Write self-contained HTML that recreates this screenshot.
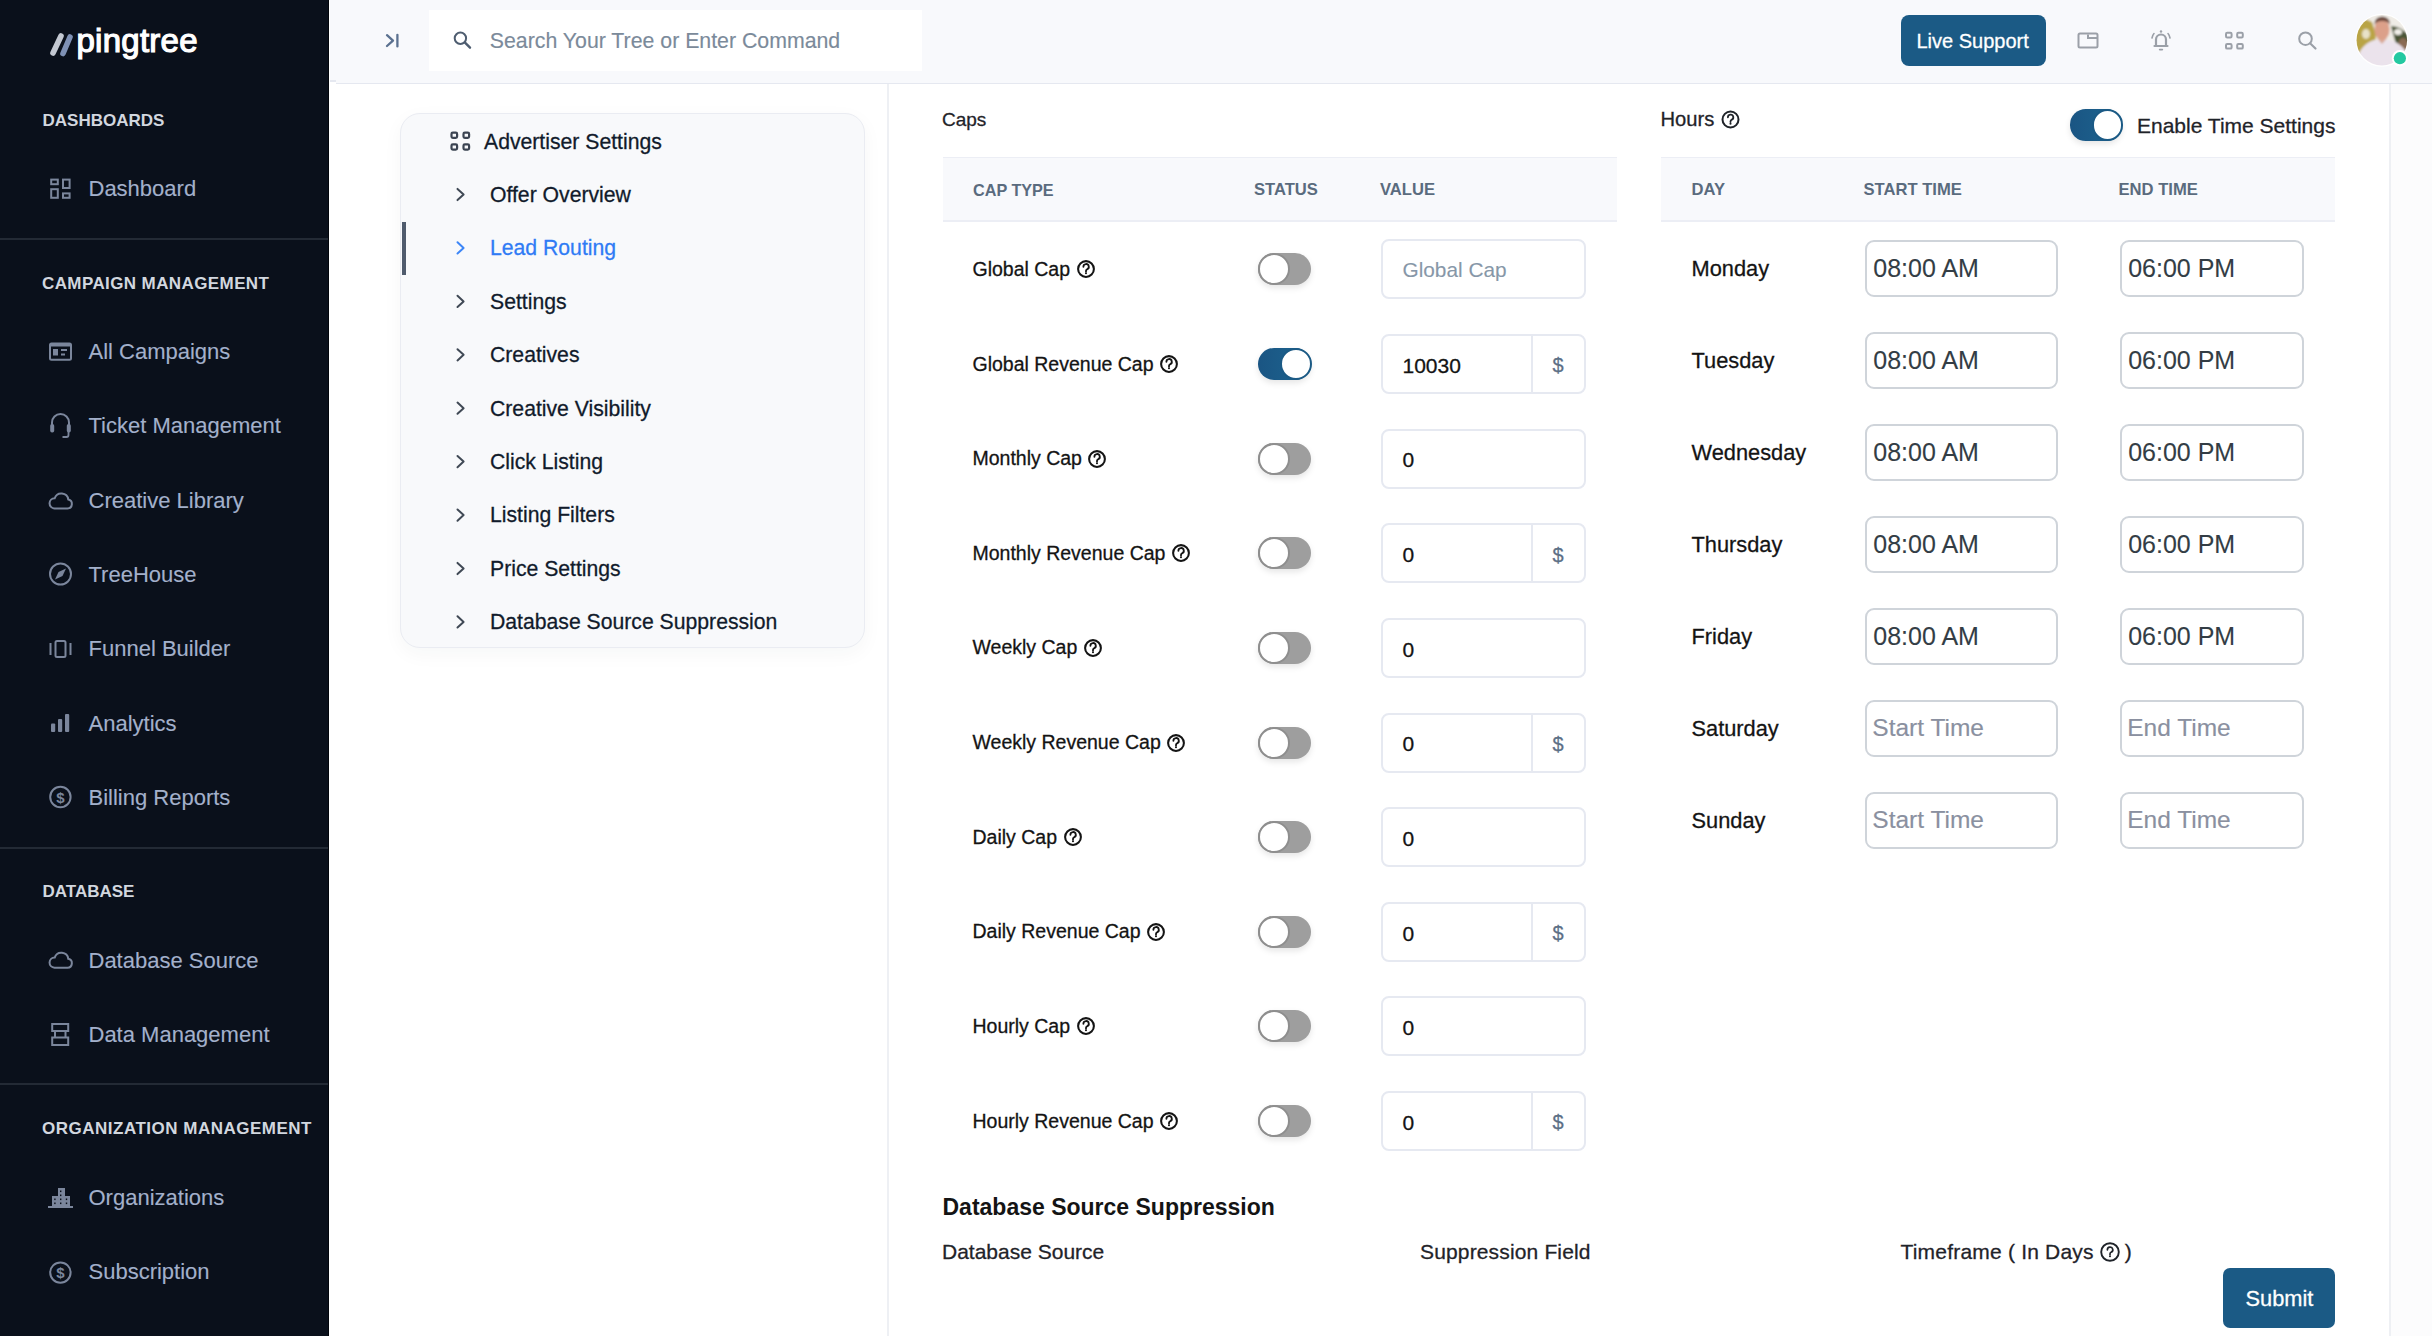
<!DOCTYPE html>
<html><head><meta charset="utf-8"><title>pingtree</title><style>
html,body{margin:0;padding:0;width:2432px;height:1336px;overflow:hidden;background:#ffffff}
body{position:relative;font-family:"Liberation Sans",sans-serif}
.t{position:absolute;line-height:1;white-space:nowrap;-webkit-text-stroke:0.28px}
</style></head><body>
<div style="position:absolute;left:0;top:0;width:329px;height:1336px;background:#0a101b"></div>
<div style="position:absolute;left:328px;top:0px;width:1px;height:1336px;background:#02050b"></div>
<div style="position:absolute;left:0;top:237.5px;width:328px;height:2px;background:#232a35"></div>
<div style="position:absolute;left:0;top:846.7px;width:328px;height:2px;background:#232a35"></div>
<div style="position:absolute;left:0;top:1083.3px;width:328px;height:2px;background:#232a35"></div>
<div class="t" style="left:42.5px;top:111.6px;font-size:17px;color:#d2d7df;font-weight:700;-webkit-text-stroke:0;">DASHBOARDS</div>
<div class="t" style="left:42.0px;top:274.7px;font-size:17px;color:#d2d7df;font-weight:700;-webkit-text-stroke:0;letter-spacing:0.4px;">CAMPAIGN MANAGEMENT</div>
<div class="t" style="left:42.5px;top:883.4px;font-size:17px;color:#d2d7df;font-weight:700;-webkit-text-stroke:0;">DATABASE</div>
<div class="t" style="left:42.0px;top:1120.2px;font-size:17px;color:#d2d7df;font-weight:700;-webkit-text-stroke:0;letter-spacing:0.5px;">ORGANIZATION MANAGEMENT</div>
<div class="t" style="left:88.5px;top:178.2px;font-size:22px;color:#a3b0cb;-webkit-text-stroke:0.12px;">Dashboard</div>
<div class="t" style="left:88.5px;top:341.1px;font-size:22px;color:#a3b0cb;-webkit-text-stroke:0.12px;">All Campaigns</div>
<div class="t" style="left:88.5px;top:415.4px;font-size:22px;color:#a3b0cb;-webkit-text-stroke:0.12px;">Ticket Management</div>
<div class="t" style="left:88.5px;top:489.8px;font-size:22px;color:#a3b0cb;-webkit-text-stroke:0.12px;">Creative Library</div>
<div class="t" style="left:88.5px;top:564.1px;font-size:22px;color:#a3b0cb;-webkit-text-stroke:0.12px;">TreeHouse</div>
<div class="t" style="left:88.5px;top:638.4px;font-size:22px;color:#a3b0cb;-webkit-text-stroke:0.12px;">Funnel Builder</div>
<div class="t" style="left:88.5px;top:712.7px;font-size:22px;color:#a3b0cb;-webkit-text-stroke:0.12px;">Analytics</div>
<div class="t" style="left:88.5px;top:787.0px;font-size:22px;color:#a3b0cb;-webkit-text-stroke:0.12px;">Billing Reports</div>
<div class="t" style="left:88.5px;top:949.6px;font-size:22px;color:#a3b0cb;-webkit-text-stroke:0.12px;">Database Source</div>
<div class="t" style="left:88.5px;top:1023.9px;font-size:22px;color:#a3b0cb;-webkit-text-stroke:0.12px;">Data Management</div>
<div class="t" style="left:88.5px;top:1187.0px;font-size:22px;color:#a3b0cb;-webkit-text-stroke:0.12px;">Organizations</div>
<div class="t" style="left:88.5px;top:1261.3px;font-size:22px;color:#a3b0cb;-webkit-text-stroke:0.12px;">Subscription</div>
<svg style="position:absolute;left:0;top:0" width="329" height="80" viewBox="0 0 329 80">
<line x1="53" y1="53" x2="61" y2="36" stroke="#c3c8d2" stroke-width="5.6" stroke-linecap="round"/>
<line x1="63" y1="53.5" x2="70" y2="37" stroke="#7f91b5" stroke-width="5.6" stroke-linecap="round"/>
</svg>
<div class="t" style="left:76.5px;top:23.6px;font-size:33px;color:#ffffff;letter-spacing:0.25px;-webkit-text-stroke:1.2px #ffffff;">pingtree</div>
<svg style="position:absolute;left:0;top:0" width="329" height="1336" viewBox="0 0 329 1336" fill="none" stroke="#7b869c" stroke-width="2">
<rect x="51.2" y="179.6" width="6.6" height="4.6"/><rect x="63" y="179.6" width="6.6" height="8.4"/><rect x="51.2" y="189.2" width="6.6" height="8.6"/><rect x="63" y="193.4" width="6.6" height="4.4"/>
<rect x="50" y="343.5" width="21" height="16.2" rx="1.5" stroke-width="2"/><line x1="50" y1="345" x2="71" y2="345" stroke-width="3"/><rect x="53" y="349" width="5" height="6.5" fill="#7b869c" stroke="none"/><line x1="61" y1="350" x2="67" y2="350" stroke-width="2"/><line x1="61" y1="354.5" x2="65" y2="354.5" stroke-width="2"/>
<path d="M52 428 v-5.5 a8.5 8.5 0 0 1 17 0 v5.5" stroke-width="2"/><rect x="50.2" y="424" width="4" height="8.5" rx="1.8" fill="#7b869c" stroke="none"/><rect x="66.8" y="424" width="4" height="8.5" rx="1.8" fill="#7b869c" stroke="none"/><path d="M68.5 432 v3 a2 2 0 0 1 -2 2 h-4" stroke-width="1.8"/>
<path d="M54.5 508.4 h13 a4.5 4.5 0 0 0 0.8 -8.9 a7 7 0 0 0 -13.6 -1.2 a5 5 0 0 0 -0.2 10.1 z" stroke-width="2"/>
<path d="M54.5 967.7 h13 a4.5 4.5 0 0 0 0.8 -8.9 a7 7 0 0 0 -13.6 -1.2 a5 5 0 0 0 -0.2 10.1 z" stroke-width="2"/>
<circle cx="60.5" cy="574" r="10.5"/><path d="M66 568.5 L62.5 576 L55 579.5 L58.5 572 Z" fill="#7b869c" stroke="none"/>
<rect x="55.5" y="641" width="10" height="16" rx="1.5"/><line x1="50.5" y1="643" x2="50.5" y2="655"/><line x1="70.5" y1="643" x2="70.5" y2="655"/>
<rect x="51" y="723.5" width="4.2" height="8.5" rx="1" fill="#7b869c" stroke="none"/><rect x="58" y="719" width="4.2" height="13" rx="1" fill="#7b869c" stroke="none"/><rect x="65" y="714" width="4.2" height="18" rx="1" fill="#7b869c" stroke="none"/>
<circle cx="60.4" cy="797" r="10.2"/><text x="60.4" y="802.5" font-family="Liberation Sans" font-size="15" font-weight="700" fill="#7b869c" stroke="none" text-anchor="middle">$</text>
<circle cx="60.4" cy="1272.6" r="10.2"/><text x="60.4" y="1278.1" font-family="Liberation Sans" font-size="15" font-weight="700" fill="#7b869c" stroke="none" text-anchor="middle">$</text>
<rect x="52.2" y="1024" width="16" height="7"/><rect x="52.2" y="1037.5" width="16" height="7.5"/><line x1="55" y1="1031" x2="55" y2="1037.5"/><line x1="65.5" y1="1031" x2="65.5" y2="1037.5"/>
<g fill="#7b869c" stroke="none"><rect x="48" y="1206" width="25" height="2"/><rect x="58" y="1188" width="7" height="19"/><rect x="52" y="1196" width="18" height="11"/></g><g fill="#0a101b" stroke="none"><rect x="60" y="1190.5" width="1.4" height="1.6"/><rect x="60" y="1194.5" width="1.4" height="1.6"/><rect x="54.2" y="1198.5" width="1.4" height="1.6"/><rect x="60" y="1198.5" width="1.4" height="1.6"/><rect x="65.8" y="1198.5" width="1.4" height="1.6"/><rect x="54.2" y="1202.5" width="1.4" height="1.6"/><rect x="60" y="1202.5" width="1.4" height="1.6"/><rect x="65.8" y="1202.5" width="1.4" height="1.6"/></g>
</svg>
<div style="position:absolute;left:330px;top:0px;width:6px;height:80.5px;background:#f8f9fc"></div>
<div style="position:absolute;left:330px;top:80px;width:6px;height:1.5px;background:#e5e8f0"></div>
<div style="position:absolute;left:336px;top:0px;width:2096px;height:83px;background:#f8f9fc"></div>
<div style="position:absolute;left:336px;top:82.5px;width:2096px;height:1.5px;background:#e5e8f0"></div>
<div style="position:absolute;left:428.5px;top:10px;width:493.5px;height:60.5px;background:#ffffff"></div>
<div class="t" style="left:489.8px;top:31.2px;font-size:21.3px;color:#7b8a9a;-webkit-text-stroke:0.15px;">Search Your Tree or Enter Command</div>
<div style="position:absolute;left:1900.5px;top:15px;width:145px;height:51px;background:#1b5a85;border-radius:8px"></div>
<div class="t" style="left:1916.5px;top:31.1px;font-size:20px;color:#ffffff;">Live Support</div>
<svg style="position:absolute;left:0;top:0" width="2432" height="90" viewBox="0 0 2432 90" fill="none">
<path d="M387 35.2 L393 40.6 L387 46" stroke="#5b7190" stroke-width="2.3" stroke-linecap="round" stroke-linejoin="round"/><line x1="397.4" y1="34.8" x2="397.4" y2="46.4" stroke="#5b7190" stroke-width="2.3" stroke-linecap="round"/>
<circle cx="460.4" cy="38.2" r="5.7" stroke="#4e5d70" stroke-width="2"/><line x1="465" y1="42.7" x2="470" y2="47.7" stroke="#4e5d70" stroke-width="2.4" stroke-linecap="round"/>
<rect x="2078.5" y="33.5" width="19" height="14" rx="1.5" stroke="#9ba0a8" stroke-width="2"/><path d="M2088 34.5 v3.5 h9" stroke="#9ba0a8" stroke-width="2"/>
<path d="M2154.5 46 h13 M2156 45.5 v-6 a5 5 0 0 1 10 0 v6" stroke="#9ba0a8" stroke-width="2.2" stroke-linecap="round"/><circle cx="2161" cy="31.5" r="1.2" fill="#9ba0a8"/><path d="M2159.6 49.6 h2.8" stroke="#9ba0a8" stroke-width="1.6" stroke-linecap="round"/><path d="M2152 38 q0.6 -3 2 -4.5 M2170 38 q-0.6 -3 -2 -4.5" stroke="#9ba0a8" stroke-width="1.6" stroke-linecap="round"/>
<rect x="2226" y="32.8" width="5.6" height="4.6" rx="1.2" stroke="#9ba0a8" stroke-width="2"/><rect x="2237.2" y="32.8" width="5.6" height="4.6" rx="1.2" stroke="#9ba0a8" stroke-width="2"/><rect x="2226" y="44" width="5.6" height="4.6" rx="1.2" stroke="#9ba0a8" stroke-width="2"/><rect x="2237.2" y="44" width="5.6" height="4.6" rx="1.2" stroke="#9ba0a8" stroke-width="2"/>
<circle cx="2305.5" cy="38.7" r="6.3" stroke="#9ba0a8" stroke-width="2"/><line x1="2310.3" y1="43.5" x2="2315.5" y2="48.5" stroke="#9ba0a8" stroke-width="2.2" stroke-linecap="round"/>
<defs><clipPath id="av"><circle cx="2381.8" cy="40.2" r="25.3"/></clipPath>
<filter id="blur1" x="-20%" y="-20%" width="140%" height="140%"><feGaussianBlur stdDeviation="1.2"/></filter></defs>
<circle cx="2381.8" cy="40.2" r="26.5" fill="#ffffff"/>
<g clip-path="url(#av)"><g filter="url(#blur1)">
<rect x="2354" y="12" width="56" height="58" fill="#efece6"/>
<path d="M2354 22 q8 -6 18 0 l4 12 l-2 20 l-18 0 z" fill="#b9a444"/>
<ellipse cx="2366" cy="34" rx="4" ry="5" fill="#e8e2c8"/>
<path d="M2391 26 q10 0 18 10 l0 18 l-12 -6 z" fill="#4a5534"/>
<ellipse cx="2398" cy="32" rx="4" ry="3" fill="#f2f0ea"/>
<ellipse cx="2403" cy="45" rx="5" ry="7" fill="#8a6a52"/>
<path d="M2356 70 q0 -24 18 -30 l7 0 l8 0 q20 4 22 30 z" fill="#ebe3ec"/>
<path d="M2377 38 l5 6 l5 -6 z" fill="#d9aa98"/>
<ellipse cx="2382" cy="29.5" rx="7.6" ry="10.5" fill="#dca089"/>
<path d="M2374.2 25 q0 -8 8 -8.5 q8 0.5 8 8.5 q-2 -4 -8 -4 q-6 0 -8 4z" fill="#6d4a3e"/>
</g></g>
<circle cx="2399.9" cy="58.2" r="8.1" fill="#ffffff"/><circle cx="2399.9" cy="58.2" r="6.1" fill="#24c9a1"/>
</svg>
<div style="position:absolute;left:399.8px;top:112.8px;width:465.5px;height:535px;box-sizing:border-box;background:#f8f9fb;border:1.5px solid #eaecf2;border-radius:20px;box-shadow:0 6px 20px rgba(30,40,60,0.04)"></div>
<div style="position:absolute;left:401.5px;top:221.5px;width:4.5px;height:53px;background:#4f5b6d"></div>
<div class="t" style="left:484.0px;top:131.1px;font-size:21.2px;color:#111b2b;">Advertiser Settings</div>
<div class="t" style="left:490.0px;top:183.8px;font-size:21.2px;color:#111b2b;">Offer Overview</div>
<div class="t" style="left:490.0px;top:237.2px;font-size:21.2px;color:#2f7bf5;">Lead Routing</div>
<div class="t" style="left:490.0px;top:290.6px;font-size:21.2px;color:#111b2b;">Settings</div>
<div class="t" style="left:490.0px;top:344.0px;font-size:21.2px;color:#111b2b;">Creatives</div>
<div class="t" style="left:490.0px;top:397.5px;font-size:21.2px;color:#111b2b;">Creative Visibility</div>
<div class="t" style="left:490.0px;top:450.9px;font-size:21.2px;color:#111b2b;">Click Listing</div>
<div class="t" style="left:490.0px;top:504.3px;font-size:21.2px;color:#111b2b;">Listing Filters</div>
<div class="t" style="left:490.0px;top:557.8px;font-size:21.2px;color:#111b2b;">Price Settings</div>
<div class="t" style="left:490.0px;top:611.2px;font-size:21.2px;color:#111b2b;">Database Source Suppression</div>
<svg style="position:absolute;left:0;top:0" width="900" height="700" viewBox="0 0 900 700" fill="none">
<rect x="451.5" y="132.6" width="5.6" height="5.2" rx="1.3" stroke="#3b4452" stroke-width="2.2"/><rect x="463.5" y="132.6" width="5.6" height="5.2" rx="1.3" stroke="#3b4452" stroke-width="2.2"/><rect x="451.5" y="144.4" width="5.6" height="5.2" rx="1.3" stroke="#3b4452" stroke-width="2.2"/><rect x="463.5" y="144.4" width="5.6" height="5.2" rx="1.3" stroke="#3b4452" stroke-width="2.2"/>
<path d="M457.5 188.9 L463.6 194.5 L457.5 200.1" stroke="#404955" stroke-width="2" stroke-linecap="round" stroke-linejoin="round"/>
<path d="M457.5 242.3 L463.6 247.9 L457.5 253.5" stroke="#3d86f7" stroke-width="2" stroke-linecap="round" stroke-linejoin="round"/>
<path d="M457.5 295.8 L463.6 301.4 L457.5 307.0" stroke="#404955" stroke-width="2" stroke-linecap="round" stroke-linejoin="round"/>
<path d="M457.5 349.2 L463.6 354.8 L457.5 360.4" stroke="#404955" stroke-width="2" stroke-linecap="round" stroke-linejoin="round"/>
<path d="M457.5 402.6 L463.6 408.2 L457.5 413.8" stroke="#404955" stroke-width="2" stroke-linecap="round" stroke-linejoin="round"/>
<path d="M457.5 456.0 L463.6 461.6 L457.5 467.2" stroke="#404955" stroke-width="2" stroke-linecap="round" stroke-linejoin="round"/>
<path d="M457.5 509.5 L463.6 515.1 L457.5 520.7" stroke="#404955" stroke-width="2" stroke-linecap="round" stroke-linejoin="round"/>
<path d="M457.5 562.9 L463.6 568.5 L457.5 574.1" stroke="#404955" stroke-width="2" stroke-linecap="round" stroke-linejoin="round"/>
<path d="M457.5 616.3 L463.6 621.9 L457.5 627.5" stroke="#404955" stroke-width="2" stroke-linecap="round" stroke-linejoin="round"/>
</svg>
<div style="position:absolute;left:886.5px;top:84px;width:2px;height:1252px;background:#eef0f4"></div>
<div style="position:absolute;left:2391px;top:84px;width:41px;height:1252px;background:#fcfcfd"></div>
<div style="position:absolute;left:2389.3px;top:84px;width:2px;height:1252px;background:#eef0f4"></div>
<div class="t" style="left:942.0px;top:110.1px;font-size:19px;color:#1f2329;">Caps</div>
<div style="position:absolute;left:942.5px;top:157px;width:674.5px;height:64.5px;box-sizing:border-box;background:#f8f9fc;border-top:1.5px solid #eceef5;border-bottom:2px solid #eceef5"></div>
<div class="t" style="left:973.0px;top:182.1px;font-size:16.2px;color:#5a6b7e;font-weight:700;-webkit-text-stroke:0;">CAP TYPE</div>
<div class="t" style="left:1254.0px;top:181.7px;font-size:16.6px;color:#5a6b7e;font-weight:700;-webkit-text-stroke:0;">STATUS</div>
<div class="t" style="left:1380.0px;top:181.7px;font-size:16.6px;color:#5a6b7e;font-weight:700;-webkit-text-stroke:0;">VALUE</div>
<div class="t" style="left:972.5px;top:259.9px;font-size:19.5px;color:#141414">Global Cap<svg width="18" height="18" viewBox="0 0 18 18" style="display:inline-block;vertical-align:-2.5px;margin-left:6.5px"><circle cx="9.0" cy="9.0" r="7.9" stroke="#141414" stroke-width="2.05" fill="none"/><path d="M6.4 6.8 a2.7 2.7 0 1 1 3.6 2.5 c-0.8 0.3 -1 0.8 -1 1.6 v0.6" stroke="#141414" stroke-width="1.84" fill="none" stroke-linecap="round"/><circle cx="9.0" cy="13.3" r="1.05" fill="#141414"/></svg></div>
<div style="position:absolute;left:1257.8px;top:253.4px;width:53px;height:32px;border-radius:16.0px;background:#9e9e9e;box-shadow:0 3px 6px rgba(0,0,0,0.10)"><div style="position:absolute;top:0;left:0px;border:2px solid #8e8e8e;width:28px;height:28px;border-radius:50%;background:#fff"></div></div>
<div style="position:absolute;left:1380.5px;top:239.4px;width:205.5px;height:60px;box-sizing:border-box;border:2px solid #e6e9f1;border-radius:8px;background:#fff"></div>
<div class="t" style="left:1402.5px;top:260.3px;font-size:20.8px;color:#8797a8;-webkit-text-stroke:0.1px;">Global Cap</div>
<div class="t" style="left:972.5px;top:354.5px;font-size:19.5px;color:#141414">Global Revenue Cap<svg width="18" height="18" viewBox="0 0 18 18" style="display:inline-block;vertical-align:-2.5px;margin-left:6.5px"><circle cx="9.0" cy="9.0" r="7.9" stroke="#141414" stroke-width="2.05" fill="none"/><path d="M6.4 6.8 a2.7 2.7 0 1 1 3.6 2.5 c-0.8 0.3 -1 0.8 -1 1.6 v0.6" stroke="#141414" stroke-width="1.84" fill="none" stroke-linecap="round"/><circle cx="9.0" cy="13.3" r="1.05" fill="#141414"/></svg></div>
<div style="position:absolute;left:1257.8px;top:348.0px;width:53px;height:32px;border-radius:16.0px;background:linear-gradient(90deg,#1a5583,#1d6590);box-shadow:0 3px 6px rgba(0,0,0,0.10)"><div style="position:absolute;top:0;left:22px;border:2px solid #1b5a85;width:28px;height:28px;border-radius:50%;background:#fff"></div></div>
<div style="position:absolute;left:1380.5px;top:334.0px;width:205.5px;height:60px;box-sizing:border-box;border:2px solid #e6e9f1;border-radius:8px;background:#fff"></div>
<div style="position:absolute;left:1531.2px;top:335.0px;width:2px;height:58px;background:#e6e9f1"></div>
<div class="t" style="left:1552.5px;top:355.4px;font-size:20px;color:#5c6f86;">$</div>
<div class="t" style="left:1402.5px;top:354.8px;font-size:21px;color:#141414;">10030</div>
<div class="t" style="left:972.5px;top:449.2px;font-size:19.5px;color:#141414">Monthly Cap<svg width="18" height="18" viewBox="0 0 18 18" style="display:inline-block;vertical-align:-2.5px;margin-left:6.5px"><circle cx="9.0" cy="9.0" r="7.9" stroke="#141414" stroke-width="2.05" fill="none"/><path d="M6.4 6.8 a2.7 2.7 0 1 1 3.6 2.5 c-0.8 0.3 -1 0.8 -1 1.6 v0.6" stroke="#141414" stroke-width="1.84" fill="none" stroke-linecap="round"/><circle cx="9.0" cy="13.3" r="1.05" fill="#141414"/></svg></div>
<div style="position:absolute;left:1257.8px;top:442.7px;width:53px;height:32px;border-radius:16.0px;background:#9e9e9e;box-shadow:0 3px 6px rgba(0,0,0,0.10)"><div style="position:absolute;top:0;left:0px;border:2px solid #8e8e8e;width:28px;height:28px;border-radius:50%;background:#fff"></div></div>
<div style="position:absolute;left:1380.5px;top:428.7px;width:205.5px;height:60px;box-sizing:border-box;border:2px solid #e6e9f1;border-radius:8px;background:#fff"></div>
<div class="t" style="left:1402.5px;top:449.4px;font-size:21px;color:#141414;">0</div>
<div class="t" style="left:972.5px;top:543.8px;font-size:19.5px;color:#141414">Monthly Revenue Cap<svg width="18" height="18" viewBox="0 0 18 18" style="display:inline-block;vertical-align:-2.5px;margin-left:6.5px"><circle cx="9.0" cy="9.0" r="7.9" stroke="#141414" stroke-width="2.05" fill="none"/><path d="M6.4 6.8 a2.7 2.7 0 1 1 3.6 2.5 c-0.8 0.3 -1 0.8 -1 1.6 v0.6" stroke="#141414" stroke-width="1.84" fill="none" stroke-linecap="round"/><circle cx="9.0" cy="13.3" r="1.05" fill="#141414"/></svg></div>
<div style="position:absolute;left:1257.8px;top:537.3px;width:53px;height:32px;border-radius:16.0px;background:#9e9e9e;box-shadow:0 3px 6px rgba(0,0,0,0.10)"><div style="position:absolute;top:0;left:0px;border:2px solid #8e8e8e;width:28px;height:28px;border-radius:50%;background:#fff"></div></div>
<div style="position:absolute;left:1380.5px;top:523.3px;width:205.5px;height:60px;box-sizing:border-box;border:2px solid #e6e9f1;border-radius:8px;background:#fff"></div>
<div style="position:absolute;left:1531.2px;top:524.3px;width:2px;height:58px;background:#e6e9f1"></div>
<div class="t" style="left:1552.5px;top:544.7px;font-size:20px;color:#5c6f86;">$</div>
<div class="t" style="left:1402.5px;top:544.0px;font-size:21px;color:#141414;">0</div>
<div class="t" style="left:972.5px;top:638.4px;font-size:19.5px;color:#141414">Weekly Cap<svg width="18" height="18" viewBox="0 0 18 18" style="display:inline-block;vertical-align:-2.5px;margin-left:6.5px"><circle cx="9.0" cy="9.0" r="7.9" stroke="#141414" stroke-width="2.05" fill="none"/><path d="M6.4 6.8 a2.7 2.7 0 1 1 3.6 2.5 c-0.8 0.3 -1 0.8 -1 1.6 v0.6" stroke="#141414" stroke-width="1.84" fill="none" stroke-linecap="round"/><circle cx="9.0" cy="13.3" r="1.05" fill="#141414"/></svg></div>
<div style="position:absolute;left:1257.8px;top:631.9px;width:53px;height:32px;border-radius:16.0px;background:#9e9e9e;box-shadow:0 3px 6px rgba(0,0,0,0.10)"><div style="position:absolute;top:0;left:0px;border:2px solid #8e8e8e;width:28px;height:28px;border-radius:50%;background:#fff"></div></div>
<div style="position:absolute;left:1380.5px;top:617.9px;width:205.5px;height:60px;box-sizing:border-box;border:2px solid #e6e9f1;border-radius:8px;background:#fff"></div>
<div class="t" style="left:1402.5px;top:638.6px;font-size:21px;color:#141414;">0</div>
<div class="t" style="left:972.5px;top:733.0px;font-size:19.5px;color:#141414">Weekly Revenue Cap<svg width="18" height="18" viewBox="0 0 18 18" style="display:inline-block;vertical-align:-2.5px;margin-left:6.5px"><circle cx="9.0" cy="9.0" r="7.9" stroke="#141414" stroke-width="2.05" fill="none"/><path d="M6.4 6.8 a2.7 2.7 0 1 1 3.6 2.5 c-0.8 0.3 -1 0.8 -1 1.6 v0.6" stroke="#141414" stroke-width="1.84" fill="none" stroke-linecap="round"/><circle cx="9.0" cy="13.3" r="1.05" fill="#141414"/></svg></div>
<div style="position:absolute;left:1257.8px;top:726.5px;width:53px;height:32px;border-radius:16.0px;background:#9e9e9e;box-shadow:0 3px 6px rgba(0,0,0,0.10)"><div style="position:absolute;top:0;left:0px;border:2px solid #8e8e8e;width:28px;height:28px;border-radius:50%;background:#fff"></div></div>
<div style="position:absolute;left:1380.5px;top:712.5px;width:205.5px;height:60px;box-sizing:border-box;border:2px solid #e6e9f1;border-radius:8px;background:#fff"></div>
<div style="position:absolute;left:1531.2px;top:713.5px;width:2px;height:58px;background:#e6e9f1"></div>
<div class="t" style="left:1552.5px;top:733.9px;font-size:20px;color:#5c6f86;">$</div>
<div class="t" style="left:1402.5px;top:733.3px;font-size:21px;color:#141414;">0</div>
<div class="t" style="left:972.5px;top:827.7px;font-size:19.5px;color:#141414">Daily Cap<svg width="18" height="18" viewBox="0 0 18 18" style="display:inline-block;vertical-align:-2.5px;margin-left:6.5px"><circle cx="9.0" cy="9.0" r="7.9" stroke="#141414" stroke-width="2.05" fill="none"/><path d="M6.4 6.8 a2.7 2.7 0 1 1 3.6 2.5 c-0.8 0.3 -1 0.8 -1 1.6 v0.6" stroke="#141414" stroke-width="1.84" fill="none" stroke-linecap="round"/><circle cx="9.0" cy="13.3" r="1.05" fill="#141414"/></svg></div>
<div style="position:absolute;left:1257.8px;top:821.2px;width:53px;height:32px;border-radius:16.0px;background:#9e9e9e;box-shadow:0 3px 6px rgba(0,0,0,0.10)"><div style="position:absolute;top:0;left:0px;border:2px solid #8e8e8e;width:28px;height:28px;border-radius:50%;background:#fff"></div></div>
<div style="position:absolute;left:1380.5px;top:807.2px;width:205.5px;height:60px;box-sizing:border-box;border:2px solid #e6e9f1;border-radius:8px;background:#fff"></div>
<div class="t" style="left:1402.5px;top:827.9px;font-size:21px;color:#141414;">0</div>
<div class="t" style="left:972.5px;top:922.3px;font-size:19.5px;color:#141414">Daily Revenue Cap<svg width="18" height="18" viewBox="0 0 18 18" style="display:inline-block;vertical-align:-2.5px;margin-left:6.5px"><circle cx="9.0" cy="9.0" r="7.9" stroke="#141414" stroke-width="2.05" fill="none"/><path d="M6.4 6.8 a2.7 2.7 0 1 1 3.6 2.5 c-0.8 0.3 -1 0.8 -1 1.6 v0.6" stroke="#141414" stroke-width="1.84" fill="none" stroke-linecap="round"/><circle cx="9.0" cy="13.3" r="1.05" fill="#141414"/></svg></div>
<div style="position:absolute;left:1257.8px;top:915.8px;width:53px;height:32px;border-radius:16.0px;background:#9e9e9e;box-shadow:0 3px 6px rgba(0,0,0,0.10)"><div style="position:absolute;top:0;left:0px;border:2px solid #8e8e8e;width:28px;height:28px;border-radius:50%;background:#fff"></div></div>
<div style="position:absolute;left:1380.5px;top:901.8px;width:205.5px;height:60px;box-sizing:border-box;border:2px solid #e6e9f1;border-radius:8px;background:#fff"></div>
<div style="position:absolute;left:1531.2px;top:902.8px;width:2px;height:58px;background:#e6e9f1"></div>
<div class="t" style="left:1552.5px;top:923.2px;font-size:20px;color:#5c6f86;">$</div>
<div class="t" style="left:1402.5px;top:922.5px;font-size:21px;color:#141414;">0</div>
<div class="t" style="left:972.5px;top:1016.9px;font-size:19.5px;color:#141414">Hourly Cap<svg width="18" height="18" viewBox="0 0 18 18" style="display:inline-block;vertical-align:-2.5px;margin-left:6.5px"><circle cx="9.0" cy="9.0" r="7.9" stroke="#141414" stroke-width="2.05" fill="none"/><path d="M6.4 6.8 a2.7 2.7 0 1 1 3.6 2.5 c-0.8 0.3 -1 0.8 -1 1.6 v0.6" stroke="#141414" stroke-width="1.84" fill="none" stroke-linecap="round"/><circle cx="9.0" cy="13.3" r="1.05" fill="#141414"/></svg></div>
<div style="position:absolute;left:1257.8px;top:1010.4px;width:53px;height:32px;border-radius:16.0px;background:#9e9e9e;box-shadow:0 3px 6px rgba(0,0,0,0.10)"><div style="position:absolute;top:0;left:0px;border:2px solid #8e8e8e;width:28px;height:28px;border-radius:50%;background:#fff"></div></div>
<div style="position:absolute;left:1380.5px;top:996.4px;width:205.5px;height:60px;box-sizing:border-box;border:2px solid #e6e9f1;border-radius:8px;background:#fff"></div>
<div class="t" style="left:1402.5px;top:1017.2px;font-size:21px;color:#141414;">0</div>
<div class="t" style="left:972.5px;top:1111.6px;font-size:19.5px;color:#141414">Hourly Revenue Cap<svg width="18" height="18" viewBox="0 0 18 18" style="display:inline-block;vertical-align:-2.5px;margin-left:6.5px"><circle cx="9.0" cy="9.0" r="7.9" stroke="#141414" stroke-width="2.05" fill="none"/><path d="M6.4 6.8 a2.7 2.7 0 1 1 3.6 2.5 c-0.8 0.3 -1 0.8 -1 1.6 v0.6" stroke="#141414" stroke-width="1.84" fill="none" stroke-linecap="round"/><circle cx="9.0" cy="13.3" r="1.05" fill="#141414"/></svg></div>
<div style="position:absolute;left:1257.8px;top:1105.1px;width:53px;height:32px;border-radius:16.0px;background:#9e9e9e;box-shadow:0 3px 6px rgba(0,0,0,0.10)"><div style="position:absolute;top:0;left:0px;border:2px solid #8e8e8e;width:28px;height:28px;border-radius:50%;background:#fff"></div></div>
<div style="position:absolute;left:1380.5px;top:1091.1px;width:205.5px;height:60px;box-sizing:border-box;border:2px solid #e6e9f1;border-radius:8px;background:#fff"></div>
<div style="position:absolute;left:1531.2px;top:1092.1px;width:2px;height:58px;background:#e6e9f1"></div>
<div class="t" style="left:1552.5px;top:1112.4px;font-size:20px;color:#5c6f86;">$</div>
<div class="t" style="left:1402.5px;top:1111.8px;font-size:21px;color:#141414;">0</div>
<div class="t" style="left:1660.5px;top:108.6px;font-size:20.2px;color:#1f2329;">Hours</div>
<div style="position:absolute;left:2069.6px;top:109.2px;width:52.5px;height:31.5px;border-radius:15.75px;background:linear-gradient(90deg,#1a5583,#1d6590);box-shadow:0 3px 6px rgba(0,0,0,0.10)"><div style="position:absolute;top:0;left:22.0px;border:2px solid #1b5a85;width:27.5px;height:27.5px;border-radius:50%;background:#fff"></div></div>
<div class="t" style="left:2137.0px;top:114.9px;font-size:21px;color:#1f2329;">Enable Time Settings</div>
<div style="position:absolute;left:1661px;top:157px;width:674px;height:64.5px;box-sizing:border-box;background:#f8f9fc;border-top:1.5px solid #eceef5;border-bottom:2px solid #eceef5"></div>
<div class="t" style="left:1691.5px;top:182.2px;font-size:16.6px;color:#5a6b7e;font-weight:700;-webkit-text-stroke:0;">DAY</div>
<div class="t" style="left:1863.5px;top:182.2px;font-size:16.6px;color:#5a6b7e;font-weight:700;-webkit-text-stroke:0;">START TIME</div>
<div class="t" style="left:2118.5px;top:182.2px;font-size:16.6px;color:#5a6b7e;font-weight:700;-webkit-text-stroke:0;">END TIME</div>
<div class="t" style="left:1691.5px;top:257.6px;font-size:21.8px;color:#141414;">Monday</div>
<div style="position:absolute;left:1864.8px;top:239.5px;width:192.8px;height:57px;box-sizing:border-box;border:2px solid #cfd4da;border-radius:9px;background:#fff"></div>
<div class="t" style="left:1873.3px;top:255.8px;font-size:25px;color:#333d45;-webkit-text-stroke:0.1px;">08:00 AM</div>
<div style="position:absolute;left:2119.7px;top:239.5px;width:184.7px;height:57px;box-sizing:border-box;border:2px solid #cfd4da;border-radius:9px;background:#fff"></div>
<div class="t" style="left:2128.2px;top:255.8px;font-size:25px;color:#333d45;-webkit-text-stroke:0.1px;">06:00 PM</div>
<div class="t" style="left:1691.5px;top:349.6px;font-size:21.8px;color:#141414;">Tuesday</div>
<div style="position:absolute;left:1864.8px;top:331.5px;width:192.8px;height:57px;box-sizing:border-box;border:2px solid #cfd4da;border-radius:9px;background:#fff"></div>
<div class="t" style="left:1873.3px;top:347.8px;font-size:25px;color:#333d45;-webkit-text-stroke:0.1px;">08:00 AM</div>
<div style="position:absolute;left:2119.7px;top:331.5px;width:184.7px;height:57px;box-sizing:border-box;border:2px solid #cfd4da;border-radius:9px;background:#fff"></div>
<div class="t" style="left:2128.2px;top:347.8px;font-size:25px;color:#333d45;-webkit-text-stroke:0.1px;">06:00 PM</div>
<div class="t" style="left:1691.5px;top:441.6px;font-size:21.8px;color:#141414;">Wednesday</div>
<div style="position:absolute;left:1864.8px;top:423.5px;width:192.8px;height:57px;box-sizing:border-box;border:2px solid #cfd4da;border-radius:9px;background:#fff"></div>
<div class="t" style="left:1873.3px;top:439.8px;font-size:25px;color:#333d45;-webkit-text-stroke:0.1px;">08:00 AM</div>
<div style="position:absolute;left:2119.7px;top:423.5px;width:184.7px;height:57px;box-sizing:border-box;border:2px solid #cfd4da;border-radius:9px;background:#fff"></div>
<div class="t" style="left:2128.2px;top:439.8px;font-size:25px;color:#333d45;-webkit-text-stroke:0.1px;">06:00 PM</div>
<div class="t" style="left:1691.5px;top:533.6px;font-size:21.8px;color:#141414;">Thursday</div>
<div style="position:absolute;left:1864.8px;top:515.5px;width:192.8px;height:57px;box-sizing:border-box;border:2px solid #cfd4da;border-radius:9px;background:#fff"></div>
<div class="t" style="left:1873.3px;top:531.8px;font-size:25px;color:#333d45;-webkit-text-stroke:0.1px;">08:00 AM</div>
<div style="position:absolute;left:2119.7px;top:515.5px;width:184.7px;height:57px;box-sizing:border-box;border:2px solid #cfd4da;border-radius:9px;background:#fff"></div>
<div class="t" style="left:2128.2px;top:531.8px;font-size:25px;color:#333d45;-webkit-text-stroke:0.1px;">06:00 PM</div>
<div class="t" style="left:1691.5px;top:625.6px;font-size:21.8px;color:#141414;">Friday</div>
<div style="position:absolute;left:1864.8px;top:607.5px;width:192.8px;height:57px;box-sizing:border-box;border:2px solid #cfd4da;border-radius:9px;background:#fff"></div>
<div class="t" style="left:1873.3px;top:623.8px;font-size:25px;color:#333d45;-webkit-text-stroke:0.1px;">08:00 AM</div>
<div style="position:absolute;left:2119.7px;top:607.5px;width:184.7px;height:57px;box-sizing:border-box;border:2px solid #cfd4da;border-radius:9px;background:#fff"></div>
<div class="t" style="left:2128.2px;top:623.8px;font-size:25px;color:#333d45;-webkit-text-stroke:0.1px;">06:00 PM</div>
<div class="t" style="left:1691.5px;top:717.6px;font-size:21.8px;color:#141414;">Saturday</div>
<div style="position:absolute;left:1864.8px;top:699.5px;width:192.8px;height:57px;box-sizing:border-box;border:2px solid #cfd4da;border-radius:9px;background:#fff"></div>
<div class="t" style="left:1872.3px;top:716.3px;font-size:24.5px;color:#8a90a0;-webkit-text-stroke:0.15px;">Start Time</div>
<div style="position:absolute;left:2119.7px;top:699.5px;width:184.7px;height:57px;box-sizing:border-box;border:2px solid #cfd4da;border-radius:9px;background:#fff"></div>
<div class="t" style="left:2127.2px;top:716.3px;font-size:24.5px;color:#8a90a0;-webkit-text-stroke:0.15px;">End Time</div>
<div class="t" style="left:1691.5px;top:809.6px;font-size:21.8px;color:#141414;">Sunday</div>
<div style="position:absolute;left:1864.8px;top:791.5px;width:192.8px;height:57px;box-sizing:border-box;border:2px solid #cfd4da;border-radius:9px;background:#fff"></div>
<div class="t" style="left:1872.3px;top:808.3px;font-size:24.5px;color:#8a90a0;-webkit-text-stroke:0.15px;">Start Time</div>
<div style="position:absolute;left:2119.7px;top:791.5px;width:184.7px;height:57px;box-sizing:border-box;border:2px solid #cfd4da;border-radius:9px;background:#fff"></div>
<div class="t" style="left:2127.2px;top:808.3px;font-size:24.5px;color:#8a90a0;-webkit-text-stroke:0.15px;">End Time</div>
<div class="t" style="left:942.5px;top:1196.4px;font-size:23px;color:#141414;font-weight:700;-webkit-text-stroke:0;">Database Source Suppression</div>
<div class="t" style="left:942.0px;top:1240.8px;font-size:21px;color:#1f2329;">Database Source</div>
<div class="t" style="left:1420.0px;top:1240.8px;font-size:21px;color:#1f2329;letter-spacing:0.15px;">Suppression Field</div>
<div class="t" style="left:1900.5px;top:1240.8px;font-size:21px;color:#1f2329;letter-spacing:0.2px">Timeframe ( In Days<svg width="20" height="20" viewBox="0 0 20 20" style="display:inline-block;vertical-align:-3.5px;margin:0 5px 0 6px"><circle cx="10.0" cy="10.0" r="8.8" stroke="#1f2329" stroke-width="1.9" fill="none"/><path d="M7.4 7.8 a2.7 2.7 0 1 1 3.6 2.5 c-0.8 0.3 -1 0.8 -1 1.6 v0.6" stroke="#1f2329" stroke-width="1.71" fill="none" stroke-linecap="round"/><circle cx="10.0" cy="14.3" r="1.05" fill="#1f2329"/></svg>)</div>
<div style="position:absolute;left:2223px;top:1268.3px;width:112.2px;height:59.5px;background:#1b5a85;border-radius:7px"></div>
<div class="t" style="left:2245.5px;top:1287.8px;font-size:21.8px;color:#ffffff;">Submit</div>
<svg style="position:absolute;left:0;top:0" width="2432" height="1336" viewBox="0 0 2432 1336" fill="none">
<circle cx="1730.5" cy="119.5" r="8.0" stroke="#1f2329" stroke-width="2.0" fill="none"/><path d="M1727.9 117.3 a2.7 2.7 0 1 1 3.6 2.5 c-0.8 0.3 -1 0.8 -1 1.6 v0.6" stroke="#1f2329" stroke-width="1.80" fill="none" stroke-linecap="round"/><circle cx="1730.5" cy="123.8" r="1.05" fill="#1f2329"/>
</svg>
</body></html>
